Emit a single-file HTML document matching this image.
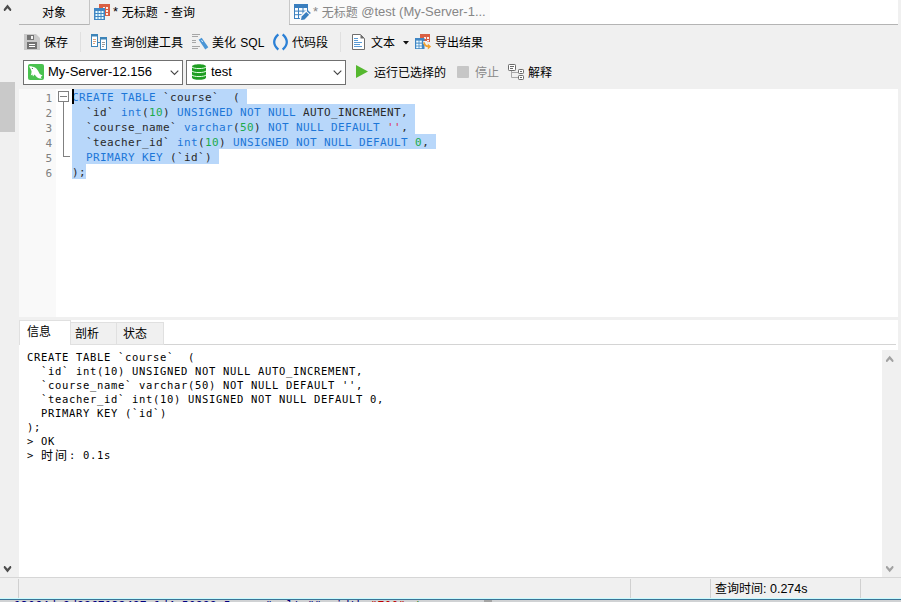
<!DOCTYPE html>
<html lang="zh-CN">
<head>
<meta charset="utf-8">
<title>无标题 - 查询</title>
<style>
html,body{margin:0;padding:0;}
body{width:901px;height:602px;position:relative;overflow:hidden;background:#f0f0f0;
  font-family:"Liberation Sans","Noto Sans CJK SC",sans-serif;font-size:12px;color:#000;}
.abs{position:absolute;}
svg{position:absolute;overflow:visible;}
.t{position:absolute;white-space:nowrap;line-height:16px;height:16px;font-size:12px;}
.l{font-size:13px;position:relative;top:-1px;}
.mono{font-family:"DejaVu Sans Mono","Noto Sans CJK SC",monospace;}
.ln{position:absolute;left:19px;width:33px;text-align:right;color:#808080;font-size:11px;margin-top:1px;line-height:15px;height:15px;}
.cl{position:absolute;left:72px;height:15px;line-height:15px;font-size:11px;letter-spacing:0.3775px;margin-top:1px;white-space:pre;color:#2a2a2a;}
.sel{position:absolute;left:72px;height:15px;background:#b8d7fa;}
.k{color:#1c76d8;}
.n{color:#1caa4c;}
.r{color:#e0304a;}
.ol{position:absolute;left:27px;height:14px;line-height:14px;font-size:10.5px;letter-spacing:0.6785px;white-space:pre;color:#000;}
</style>
</head>
<body>

<!-- ===== left scrollbar strip ===== -->
<div class="abs" style="left:0;top:82px;width:15px;height:50px;background:#c9c9c9;"></div>

<!-- ===== tab bar ===== -->
<div class="abs" style="left:19px;top:24px;width:71px;height:1px;background:#b4b4b4;"></div>
<div class="abs" style="left:89px;top:0;width:1px;height:25px;background:#c4c4c4;"></div>
<div class="t" style="left:42px;top:5px;">对象</div>
<div class="abs" style="left:289px;top:0;width:609px;height:24px;background:#fff;border-bottom:1px solid #b4b4b4;"></div>
<div class="abs" style="left:289px;top:0;width:201px;height:24px;background:#fafafa;border-left:1px solid #c8c8c8;box-sizing:border-box;"></div>
<div class="t" style="left:113px;top:5px;"><span class="l">* </span>无标题<span class="l" style="margin-left:2.8px;margin-right:-1.1px;"> - </span>查询</div>
<div class="t" style="left:313px;top:5px;color:#868686;"><span class="l">* </span>无标题<span class="l"> @test (My-Server-1...</span></div>


<!-- tab icons -->
<svg style="left:94px;top:4px" width="16" height="16" viewBox="0 0 16 16">
  <rect x="5" y="0" width="11" height="12" fill="#d95f43"/>
  <g fill="#fdeee8"><rect x="9" y="3" width="2" height="2"/><rect x="12" y="3" width="2" height="2"/><rect x="12" y="6" width="2" height="2"/><rect x="12" y="9" width="2" height="2"/></g>
  <rect x="0" y="4" width="11" height="12" fill="#3f86c4"/>
  <g fill="#e6fbff"><rect x="1.5" y="7" width="2" height="2"/><rect x="4.5" y="7" width="2" height="2"/><rect x="7.5" y="7" width="2" height="2"/><rect x="1.5" y="10" width="2" height="2"/><rect x="4.5" y="10" width="2" height="2"/><rect x="7.5" y="10" width="2" height="2"/><rect x="1.5" y="13" width="2" height="2"/><rect x="4.5" y="13" width="2" height="2"/><rect x="7.5" y="13" width="2" height="2"/></g>
</svg>
<svg style="left:294px;top:4px" width="17" height="16" viewBox="0 0 17 16">
  <rect x="0" y="0" width="14" height="15" fill="#3a7fbf"/>
  <g fill="#fafdff"><rect x="1" y="4" width="3" height="2.6"/><rect x="5" y="4" width="3.5" height="2.6"/><rect x="9.5" y="4" width="3.5" height="2.6"/><rect x="1" y="7.6" width="3" height="2.6"/><rect x="5" y="7.6" width="3.5" height="2.6"/><rect x="9.5" y="7.6" width="3.5" height="2.6"/><rect x="1" y="11.2" width="3" height="2.8"/><rect x="5" y="11.2" width="3.5" height="2.8"/><rect x="9.5" y="11.2" width="3.5" height="2.8"/></g>
  <path d="M5.6 17 L6.3 11.8 L12.2 5.9 L17.2 10.8 L14.6 13.4 L14.6 17 Z" fill="#fafafa"/>
  <path d="M7 16 L7.7 12.6 L12.3 8 L15.1 10.8 L10.5 15.4 Z" fill="#3a7fbf"/>
  <path d="M13 7.3 L14 6.3 L16.8 9.1 L15.8 10.1 Z" fill="#3a7fbf"/>
</svg>

<!-- ===== toolbar row 1 ===== -->
<div class="t" style="left:44px;top:35px;">保存</div>
<div class="abs" style="left:80px;top:32px;width:1px;height:20px;background:#e0e0e0;"></div>
<div class="t" style="left:111px;top:35px;">查询创建工具</div>
<div class="t" style="left:212px;top:35px;">美化<span style="margin-left:1px;"> SQL</span></div>
<div class="t" style="left:292px;top:35px;">代码段</div>
<div class="abs" style="left:340px;top:32px;width:1px;height:20px;background:#e0e0e0;"></div>
<div class="t" style="left:371px;top:35px;">文本</div>
<svg style="left:403px;top:41px" width="6" height="4" viewBox="0 0 6 4"><path d="M0 0 H6 L3 3.6 Z" fill="#111"/></svg>
<div class="t" style="left:435px;top:35px;">导出结果</div>


<!-- save -->
<svg style="left:24px;top:34px" width="16" height="16" viewBox="0 0 16 16">
  <path d="M0 0 H12 L16 4 V16 H0 Z" fill="#c9c9c9"/>
  <rect x="3" y="1" width="7" height="5" fill="#737373"/><rect x="7" y="2" width="2" height="3" fill="#f4f4f4"/>
  <rect x="3" y="8" width="10" height="7" fill="#737373"/><rect x="5" y="10" width="6" height="1" fill="#fff"/><rect x="5" y="12" width="6" height="1" fill="#fff"/>
</svg>
<!-- query builder -->
<svg style="left:91px;top:34px" width="17" height="16" viewBox="0 0 17 16">
  <rect x="0.5" y="0.5" width="6" height="12" fill="#fff" stroke="#3d84b8"/><rect x="0" y="0" width="7" height="2.5" fill="#3d84b8"/>
  <rect x="2" y="5" width="3" height="1" fill="#d9a27c"/><rect x="2" y="7" width="3" height="1" fill="#d9a27c"/><rect x="2" y="9" width="2" height="1" fill="#d9a27c"/>
  <rect x="7" y="8" width="2" height="1" fill="#3d84b8"/>
  <rect x="9.5" y="3.5" width="6" height="12" fill="#fff" stroke="#3d84b8"/><rect x="9" y="3" width="7" height="2.5" fill="#3d84b8"/>
  <rect x="11" y="8" width="3" height="1" fill="#9a9a9a"/><rect x="11" y="10" width="3" height="1" fill="#9a9a9a"/><rect x="11" y="12" width="2" height="1" fill="#9a9a9a"/>
</svg>
<!-- beautify -->
<svg style="left:192px;top:34px" width="17" height="16" viewBox="0 0 17 16">
  <g fill="#a6a6a6"><rect x="0" y="0" width="8" height="1"/><rect x="0" y="2" width="6" height="1"/><rect x="0" y="6" width="4" height="1"/><rect x="0" y="8" width="4" height="1"/><rect x="0" y="12" width="8" height="1"/><rect x="0" y="14" width="6" height="1"/></g>
  <path d="M9.7 3.7 L16.3 13.3 L13.3 15.4 L6.7 5.8 Z" fill="#4b96d6"/>
  <path d="M9.5 6.2 L10.7 8" stroke="#e4f1fc" stroke-width="1"/>
</svg>
<!-- snippet parens -->
<svg style="left:272px;top:33px" width="16" height="18" viewBox="0 0 16 18">
  <path d="M6.3 1.3 Q-1.9 9 6.3 16.7" fill="none" stroke="#2b80d6" stroke-width="2.3"/>
  <path d="M10.7 1.3 Q18.9 9 10.7 16.7" fill="none" stroke="#2b80d6" stroke-width="2.3"/>
</svg>
<!-- text doc -->
<svg style="left:352px;top:34px" width="14" height="16" viewBox="0 0 14 16">
  <path d="M0.5 0.5 H8.5 L12.5 4.5 V15.5 H0.5 Z" fill="#fff" stroke="#6e6e6e"/>
  <path d="M8.5 0.5 V4.5 H12.5 Z" fill="#6e6e6e"/>
  <g fill="#5a9bd5"><rect x="2" y="4" width="4" height="1"/><rect x="2" y="6" width="4" height="1"/><rect x="2" y="8" width="8" height="1"/><rect x="2" y="10" width="6" height="1"/><rect x="2" y="12" width="8" height="1"/></g>
</svg>
<!-- export -->
<svg style="left:415px;top:34px" width="18" height="16" viewBox="0 0 18 16">
  <rect x="5" y="0" width="10" height="8" fill="#d95f43"/>
  <g fill="#fdeee8"><rect x="9" y="3" width="2" height="2"/><rect x="12" y="3" width="2" height="2"/><rect x="12" y="6" width="2" height="1.5"/></g>
  <rect x="0" y="4" width="9.5" height="11" fill="#3f86c4"/>
  <g fill="#f2fdff"><rect x="1.2" y="6.6" width="2.4" height="2"/><rect x="4.4" y="6.6" width="2.4" height="2"/><rect x="1.2" y="9.6" width="2.4" height="2"/><rect x="4.4" y="9.6" width="2.4" height="2"/><rect x="1.2" y="12.4" width="2.4" height="1.8"/><rect x="4.4" y="12.4" width="2.4" height="1.8"/></g>
  <path d="M8.2 7 L12 7 L12 10 L8.2 10 Z" fill="#f4f4f4"/><path d="M9 8.4 Q9.6 12.4 13.4 12.4" fill="none" stroke="#f0a030" stroke-width="1.9"/>
  <path d="M12.8 9.8 L16.2 12.6 L12.8 15.4 Z" fill="#f0a030"/>
</svg>

<!-- ===== toolbar row 2 ===== -->
<div class="abs" style="left:23px;top:60px;width:160px;height:25px;box-sizing:border-box;background:#fff;border:1px solid #707070;"></div>
<div class="t" style="left:48px;top:65px;"><span class="l">My-Server-12.156</span></div>
<svg style="left:170px;top:70px" width="9" height="6" viewBox="0 0 9 6"><path d="M0.7 0.7 L4.5 4.5 L8.3 0.7" fill="none" stroke="#444" stroke-width="1.1"/></svg>
<div class="abs" style="left:186px;top:60px;width:160px;height:25px;box-sizing:border-box;background:#fff;border:1px solid #707070;"></div>
<div class="t" style="left:211px;top:65px;"><span class="l">test</span></div>
<svg style="left:333px;top:70px" width="9" height="6" viewBox="0 0 9 6"><path d="M0.7 0.7 L4.5 4.5 L8.3 0.7" fill="none" stroke="#444" stroke-width="1.1"/></svg>
<svg style="left:356px;top:65px" width="12" height="13" viewBox="0 0 12 13"><path d="M0 0 L12 6.5 L0 13 Z" fill="#55b82f"/></svg>
<div class="t" style="left:374px;top:65px;">运行已选择的</div>
<div class="abs" style="left:457px;top:66px;width:12px;height:12px;background:#c6c6c6;border-radius:1px;"></div>
<div class="t" style="left:475px;top:65px;color:#8a8a8a;">停止</div>
<div class="t" style="left:528px;top:65px;">解释</div>


<!-- mysql conn icon -->
<svg style="left:28px;top:64px" width="16" height="16" viewBox="0 0 16 16">
  <rect x="0" y="0" width="16" height="16" rx="2" fill="#4ac24f"/>
  <path d="M1 2.2 C3 2 5.4 2.6 7 3.6 C9 4.8 10.4 7 11.2 9 C12 10.4 13 11.2 14.6 11.2 L12.8 13 L13.8 14.8 C11.6 14.8 9.6 14.2 8.2 12.6 L6.6 10.4 L5 12.6 L4.4 10.6 L2.8 11.6 C3.2 10 3.6 8.8 3.6 7.6 C3.4 6 2.2 4 1 2.2 Z" fill="#fff"/>
  <circle cx="4.4" cy="4.5" r="0.6" fill="#2f7d33"/>
</svg>
<!-- database icon -->
<svg style="left:192px;top:64px" width="14" height="16" viewBox="0 0 14 16">
  <path d="M0 2.6 C0 -0.6 14 -0.6 14 2.6 V13.4 C14 16.6 0 16.6 0 13.4 Z" fill="#1f9e22"/>
  <path d="M0 3 C1.4 5.1 12.6 5.1 14 3" fill="none" stroke="#e4ffe4" stroke-width="1"/>
  <path d="M0 7 C1.4 9.1 12.6 9.1 14 7" fill="none" stroke="#e4ffe4" stroke-width="1"/>
  <path d="M0 11 C1.4 13.1 12.6 13.1 14 11" fill="none" stroke="#e4ffe4" stroke-width="1"/>
</svg>
<!-- explain icon -->
<svg style="left:508px;top:64px" width="17" height="16" viewBox="0 0 17 16">
  <path d="M3.5 7 V13.5 H10 M3.5 8.5 H10" fill="none" stroke="#a8a8a8" stroke-width="1"/>
  <rect x="0.5" y="0.5" width="7" height="6" rx="0.8" fill="#fff" stroke="#6a6a6a"/>
  <rect x="2" y="2" width="4" height="1" fill="#6a6a6a"/><rect x="2" y="4" width="3" height="1" fill="#6a6a6a"/>
  <rect x="10.5" y="5.5" width="5" height="4" rx="0.8" fill="#fff" stroke="#6a6a6a"/><rect x="12" y="7" width="2" height="1" fill="#6a6a6a"/>
  <rect x="10.5" y="11.5" width="5" height="4" rx="0.8" fill="#fff" stroke="#6a6a6a"/><rect x="12" y="13" width="2" height="1" fill="#6a6a6a"/>
</svg>

<!-- ===== editor ===== -->
<div class="abs" style="left:19px;top:89px;width:879px;height:228px;background:#fff;"></div>
<div class="abs" style="left:19px;top:89px;width:37px;height:228px;background:#f9f9f9;"></div>
<div class="ln mono" style="top:90px;">1</div>
<div class="ln mono" style="top:105px;">2</div>
<div class="ln mono" style="top:120px;">3</div>
<div class="ln mono" style="top:135px;">4</div>
<div class="ln mono" style="top:150px;">5</div>
<div class="ln mono" style="top:165px;">6</div>
<!-- fold marker -->
<div class="abs" style="left:58px;top:91px;width:11px;height:11px;box-sizing:border-box;border:1px solid #808080;background:#fff;"></div>
<div class="abs" style="left:60px;top:96px;width:7px;height:1px;background:#808080;"></div>
<div class="abs" style="left:63px;top:102px;width:1px;height:55px;background:#808080;"></div>
<div class="abs" style="left:63px;top:156px;width:7px;height:1px;background:#808080;"></div>

<div class="sel" style="top:89px;width:175px;"></div>
<div class="sel" style="top:104px;width:343px;"></div>
<div class="sel" style="top:119px;width:343px;"></div>
<div class="sel" style="top:134px;width:364px;"></div>
<div class="sel" style="top:149px;width:147px;"></div>
<div class="sel" style="top:164px;width:14px;"></div>
<div class="cl mono" style="top:89px;"><span class="k">CREATE TABLE</span> `course`  (</div>
<div class="cl mono" style="top:104px;">  `id` <span class="k">int</span>(<span class="n">10</span>) <span class="k">UNSIGNED NOT NULL</span> AUTO_INCREMENT,</div>
<div class="cl mono" style="top:119px;">  `course_name` <span class="k">varchar</span>(<span class="n">50</span>) <span class="k">NOT NULL DEFAULT</span> <span class="r">''</span>,</div>
<div class="cl mono" style="top:134px;">  `teacher_id` <span class="k">int</span>(<span class="n">10</span>) <span class="k">UNSIGNED NOT NULL DEFAULT</span> <span class="n">0</span>,</div>
<div class="cl mono" style="top:149px;">  <span class="k">PRIMARY KEY</span> (`id`)</div>
<div class="cl mono" style="top:164px;">);</div>
<div class="abs" style="left:72px;top:89px;width:1.5px;height:15px;background:#000;"></div>

<!-- ===== result tabs ===== -->
<div class="abs" style="left:19px;top:320px;width:879px;height:25px;background:#fff;"></div>
<div class="abs" style="left:19px;top:344px;width:877px;height:1px;background:#d4d4d4;"></div>
<div class="abs" style="left:70px;top:322px;width:47px;height:23px;box-sizing:border-box;background:#f0f0f0;border:1px solid #e0e0e0;"></div>
<div class="abs" style="left:116px;top:322px;width:48px;height:23px;box-sizing:border-box;background:#f0f0f0;border:1px solid #e0e0e0;"></div>
<div class="abs" style="left:19px;top:320px;width:52px;height:25px;box-sizing:border-box;background:#fff;border:1px solid #e0e0e0;border-bottom:none;"></div>
<div class="t" style="left:27px;top:324px;">信息</div>
<div class="t" style="left:75px;top:326px;">剖析</div>
<div class="t" style="left:123px;top:326px;">状态</div>

<!-- ===== output ===== -->
<div class="abs" style="left:19px;top:345px;width:879px;height:232px;background:#fff;"></div>
<div class="abs" style="left:882px;top:350px;width:19px;height:227px;background:#f0f0f0;"></div>
<div class="ol mono" style="top:350px;">CREATE TABLE `course`  (</div>
<div class="ol mono" style="top:364px;">  `id` int(10) UNSIGNED NOT NULL AUTO_INCREMENT,</div>
<div class="ol mono" style="top:378px;">  `course_name` varchar(50) NOT NULL DEFAULT '',</div>
<div class="ol mono" style="top:392px;">  `teacher_id` int(10) UNSIGNED NOT NULL DEFAULT 0,</div>
<div class="ol mono" style="top:406px;">  PRIMARY KEY (`id`)</div>
<div class="ol mono" style="top:420px;">);</div>
<div class="ol mono" style="top:434px;">&gt; OK</div>
<div class="ol mono" style="top:448px;">&gt; <span style="font-size:12px;letter-spacing:2px;position:relative;top:1px;">时间</span>: 0.1s</div>

<!-- ===== status bar ===== -->
<div class="abs" style="left:0;top:577px;width:901px;height:1px;background:#d6d6d6;"></div>
<div class="abs" style="left:18px;top:579px;width:1px;height:19px;background:#d0d0d0;"></div>
<div class="abs" style="left:630px;top:579px;width:1px;height:19px;background:#d0d0d0;"></div>
<div class="abs" style="left:710px;top:579px;width:1px;height:19px;background:#d0d0d0;"></div>
<div class="abs" style="left:860px;top:579px;width:1px;height:19px;background:#d0d0d0;"></div>
<div class="t" style="left:715px;top:581px;">查询时间<span style="font-size:12.5px;">: 0.274s</span></div>

<svg style="left:0;top:0" width="901" height="602" viewBox="0 0 901 602">
  <path d="M7.5 4.6 L3.7 9.2 L4 11 L5 11 L7.5 8.3 L10 11 L11 11 L11.3 9.2 Z" fill="#4d4d4d"/>
  <path d="M7.5 572.4 L3.7 567.8 L4 566 L5 566 L7.5 568.7 L10 566 L11 566 L11.3 567.8 Z" fill="#4d4d4d"/>
  <path d="M889.7 355.7 L885.9 360.3 L886.2 362 L887.2 362 L889.7 359.3 L892.2 362 L893.2 362 L893.5 360.3 Z" fill="#a2a2a2"/>
  <path d="M889.7 572.3 L885.9 567.7 L886.2 566 L887.2 566 L889.7 568.7 L892.2 566 L893.2 566 L893.5 567.7 Z" fill="#a2a2a2"/>
</svg>

<!-- ===== bottom sliver of underlying window ===== -->
<div class="abs" style="left:0;top:598px;width:901px;height:1px;background:#c8fbff;"></div>
<div class="abs" style="left:0;top:599px;width:901px;height:1px;background:#3b7496;"></div>
<div class="abs" style="left:0;top:600px;width:901px;height:2px;background:#d0d2d4;"></div>
<div class="abs" style="left:484px;top:600px;width:8px;height:2px;background:#a4a4a4;"></div>
<div class="abs mono" style="left:14px;top:599px;font-size:11.627px;line-height:14px;color:#000080;white-space:pre;">13064de9d9867132497e1d4e50888a5a.png" alt="" width=<span style="color:#c00000">"700"</span> <span style="color:#2a8a2a">/&gt;</span></div>

</body>
</html>
